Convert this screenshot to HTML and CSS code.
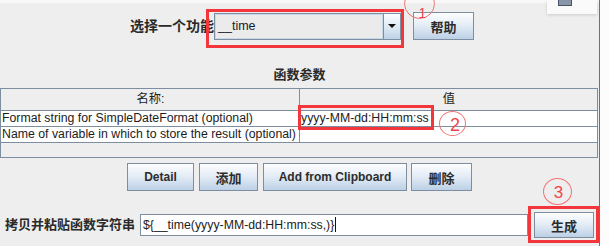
FILE: index.html
```html
<!DOCTYPE html>
<html lang="zh">
<head>
    <meta charset="UTF-8">
    <title>函数助手</title>
    <link rel="stylesheet" href="styles.css">
</head>
<body>
<div class="screen">
    <div class="panel">
        <div class="topline"></div>

        <div class="chooser">
            <span class="chooser-label">选择一个功能</span>
            <div class="combo">
                <span class="combo-text">__time</span>
                <span class="combo-arrow"><span class="tri"></span></span>
            </div>
            <button class="btn btn-cjk btn-help">帮助</button>
        </div>

        <div class="params-title">函数参数</div>
        <div class="params">
            <div class="params-row params-head">
                <div class="cell">名称:</div>
                <div class="cell">值</div>
            </div>
            <div class="params-row">
                <div class="cell">Format string for SimpleDateFormat (optional)</div>
                <div class="cell">yyyy-MM-dd:HH:mm:ss</div>
            </div>
            <div class="params-row">
                <div class="cell">Name of variable in which to store the result (optional)</div>
                <div class="cell"></div>
            </div>
            <div class="params-fill"></div>
        </div>

        <div class="actions">
            <button class="btn btn-detail">Detail</button>
            <button class="btn btn-cjk btn-add">添加</button>
            <button class="btn btn-clip">Add from Clipboard</button>
            <button class="btn btn-cjk btn-del">删除</button>
        </div>

        <div class="output">
            <span class="output-label">拷贝并粘贴函数字符串</span>
            <div class="field">${__time(yyyy-MM-dd:HH:mm:ss,)}<span class="caret"></span></div>
            <button class="btn btn-cjk btn-gen">生成</button>
        </div>

        <!-- floating bits drawn over the dialog -->
        <div class="mini-bar">
            <svg width="14" height="6" viewBox="0 0 14 6">
                <rect x="0.5" y="-2" width="13" height="7.5" fill="#8896a8" stroke="#46546a"/>
            </svg>
        </div>

        <div class="mark mark-1"></div>
        <div class="mark mark-2"></div>
        <div class="mark mark-3"></div>
        <div class="num num-1">1</div>
        <div class="num num-2">2</div>
        <div class="num num-3">3</div>
    </div>
    <div class="edge"></div>
    <div class="gutter"></div>
</div>
</body>
</html>
```

FILE: styles.css
```css
body {
    margin: 0;
    background: #fcfcfd;
    font-family: "Liberation Sans", "Noto Sans CJK SC", sans-serif;
    color: #1c1c1c;
}

.screen {
    display: flex;
    width: 609px;
    height: 246px;
}
.panel {
    position: relative;
    width: 599px;
    background: #eeeeee;
    overflow: hidden;
}
.edge {
    width: 1px;
    background: #2f7fd4;
}
.gutter {
    flex: 1;
    background: #fcfcfd;
}
.topline {
    height: 3px;
    background: #f8f8f8;
}

/* top row */
.chooser {
    display: flex;
    align-items: center;
    height: 46px;
    padding-left: 130px;
}
.chooser-label {
    font-size: 14px;
    font-weight: bold;
    color: #2a2a2a;
    line-height: 16px;
}
.combo {
    display: flex;
    width: 187px;
    height: 27px;
    box-sizing: border-box;
    border: 1px solid #7d8ea1;
    background: #ebebeb;
}
.combo-text {
    flex: 1;
    border: 1px solid #c9d8e8;
    padding-left: 2px;
    font-size: 12.5px;
    line-height: 23px;
    color: #1a1a2a;
}
.combo-arrow {
    display: flex;
    align-items: center;
    justify-content: center;
    width: 16px;
    border-left: 1px solid #7d8ea1;
    background: linear-gradient(#fbfdff, #dde8f3 55%, #bdd1e6);
}
.tri {
    width: 0;
    height: 0;
    border-left: 4px solid transparent;
    border-right: 4px solid transparent;
    border-top: 4px solid #111;
}

.btn {
    box-sizing: border-box;
    height: 28px;
    padding: 0;
    border: 1px solid #7d8ea1;
    background: linear-gradient(#fdfeff, #e2ebf5 50%, #bcd0e6);
    font-family: "Liberation Sans", "Noto Sans CJK SC", sans-serif;
    font-size: 12px;
    font-weight: bold;
    color: #2c2c2c;
}
.btn-cjk {
    font-size: 13px;
}
.btn-help {
    width: 61px;
    margin-left: 12px;
}

/* parameters table */
.params-title {
    margin-top: 13px;
    height: 26px;
    line-height: 26px;
    text-align: center;
    font-size: 13px;
    font-weight: bold;
    color: #2a2a2a;
}
.params {
    width: 598px;
    box-sizing: border-box;
    border: 1px solid #7d8ea1;
}
.params-row {
    display: flex;
    height: 16px;
    box-sizing: border-box;
    border-bottom: 1px solid #7d8ea1;
    background: #ffffff;
    font-size: 12.3px;
    line-height: 15px;
}
.params-row .cell {
    padding-left: 1px;
    white-space: nowrap;
    overflow: hidden;
}
.params-row .cell:first-child {
    width: 297px;
    flex: none;
    border-right: 1px solid #7d8ea1;
}
.params-row .cell:last-child {
    flex: 1;
}
.params-head {
    height: 22px;
    background: #eeeeee;
    line-height: 21px;
}
.params-head .cell {
    text-align: center;
    color: #222;
}
.params-fill {
    height: 14px;
}

/* buttons under the table */
.actions {
    display: flex;
    justify-content: center;
    gap: 5px;
    margin-top: 5px;
}
.btn-detail { width: 67px; }
.btn-add { width: 59px; }
.btn-clip { width: 144px; }
.btn-del { width: 61px; margin-left: -1px; }

/* bottom row */
.output {
    display: flex;
    align-items: center;
    height: 26px;
    margin-top: 21px;
    padding-left: 5px;
}
.output-label {
    width: 135px;
    font-size: 13px;
    font-weight: bold;
    color: #2a2a2a;
    line-height: 16px;
}
.field {
    width: 388px;
    height: 22px;
    box-sizing: border-box;
    border: 1px solid #7d8ea1;
    background: #ffffff;
    padding-left: 2px;
    font-size: 12.3px;
    line-height: 20px;
    white-space: nowrap;
}
.caret {
    display: inline-block;
    width: 1px;
    height: 15px;
    margin-left: 1px;
    background: #111;
    vertical-align: -3px;
}
.btn-gen {
    width: 60px;
    height: 26px;
    margin-left: 6px;
}

/* overlays */
.mini-bar {
    position: absolute;
    top: 0;
    left: 547px;
    width: 50px;
    height: 14px;
    background: #fafafa;
    box-shadow: 0 1px 3px rgba(0, 0, 0, 0.14);
}
.mini-bar svg {
    position: absolute;
    top: 0;
    left: 11px;
}

.mark {
    position: absolute;
    border: 3px solid #f2363b;
    box-sizing: border-box;
}
.mark-1 { left: 206px; top: 9px; width: 198px; height: 39px; }
.mark-2 { left: 298px; top: 105px; width: 136px; height: 25px; }
.mark-3 { left: 528px; top: 206px; width: 71px; height: 37px; }

.num {
    position: absolute;
    box-sizing: border-box;
    border: 1px solid #f37373;
    border-radius: 50%;
    color: #f0454a;
    text-align: center;
    font-family: "Liberation Sans", sans-serif;
}
.num-1 {
    left: 404px;
    top: -12px;
    width: 31px;
    height: 31px;
    padding: 17px 0 0 6px;
    font-size: 14px;
    line-height: 14px;
}
.num-2 {
    left: 439px;
    top: 111px;
    width: 27px;
    height: 25px;
    padding-left: 5px;
    font-size: 18px;
    line-height: 26px;
}
.num-3 {
    left: 543px;
    top: 178px;
    width: 29px;
    height: 27px;
    padding-left: 2px;
    font-size: 17px;
    line-height: 27px;
}
```
